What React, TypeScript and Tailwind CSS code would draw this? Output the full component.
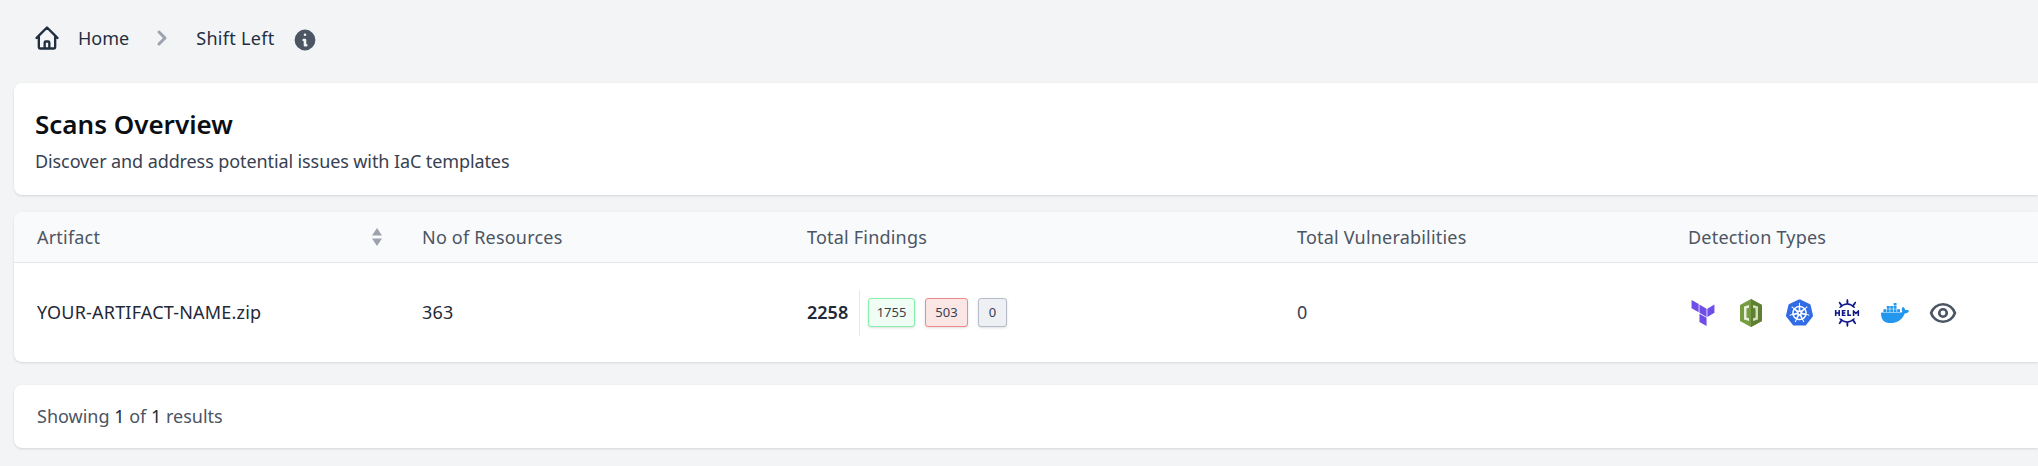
import React from 'react';
import { HiInformationCircle, HiOutlineEye, HiOutlineHome, HiChevronRight } from 'react-icons/hi';
import { SiDocker, SiHelm, SiKubernetes, SiTerraform } from 'react-icons/si';

function CloudFormationIcon() {
  return (
    <svg viewBox="0 0 22 28" className="h-[28px] w-[22px] shrink-0">
      <path d="M11 0 22 6v16l-11 6L0 22V6z" fill="#759c3e" />
      <path d="M11 0 22 6v16l-11 6z" fill="#5f7f33" />
      <path d="M4 7.500l5-1.500v16l-5-1.500z" fill="#e9eedd" />
      <path d="M13 6l5 1.500v13L13 22z" fill="#d3deba" />
      <path d="M6.500 9.500l2.500-.7v10.400l-2.500-.7z" fill="#759c3e" />
      <path d="M13 8.800l2.500.7v9l-2.500.7z" fill="#5f7f33" />
    </svg>
  );
}

function SortArrows() {
  return (
    <svg viewBox="0 0 10 18" className="h-[18px] w-[10px] text-[#9ca3af]" fill="currentColor">
      <path d="M5 0l5 7.500H0z" />
      <path d="M5 18l5-7.500H0z" />
    </svg>
  );
}

function Badge({ value, className }: { value: number; className: string }) {
  return (
    <span className={`flex h-[29px] items-center justify-center rounded-[3px] border text-[13px] text-[#374151] shadow-sm ${className}`}>
      {value}
    </span>
  );
}

function IconSlot({ children }: { children: React.ReactNode }) {
  return <div className="flex w-[24px] justify-center">{children}</div>;
}

const columns = 'grid grid-cols-[385px_385px_490px_391px_1fr]';

export default function App() {
  return (
    <div className="h-[466px] w-full overflow-hidden bg-[#f3f4f6] pl-[14px] font-['Noto_Sans',sans-serif]">
      {/* Breadcrumb */}
      <nav className="flex h-[83px] items-center pb-[7px] pl-[19px] text-[18px] text-[#1f2f3f]">
        <HiOutlineHome className="h-[28px] w-[28px] shrink-0" />
        <span className="ml-[17px]">Home</span>
        <HiChevronRight className="ml-[18px] h-[30px] w-[30px] text-[#9ca3af]" />
        <span className="ml-[19px] tracking-[0.3px]">Shift Left</span>
        <HiInformationCircle className="ml-[17px] mt-[4px] h-[26px] w-[26px] text-[#4b5563]" />
      </nav>

      <div className="flex flex-col gap-[17px]">
        {/* Header card */}
        <section className="rounded-l-lg bg-white pl-[21px] pt-[25px] h-[112px] shadow">
          <h1 className="text-[26px] leading-[32px] font-semibold text-[#0b0f14]">Scans Overview</h1>
          <p className="mt-[9px] text-[18px] leading-[24px] tracking-[-0.1px] text-[#374151]">
            Discover and address potential issues with IaC templates
          </p>
        </section>

        {/* Table */}
        <section className="rounded-l-lg bg-white shadow">
          <div className={`${columns} h-[51px] items-center rounded-tl-lg border-b border-[#e5e7eb] bg-[#f9fafb] pl-[23px] text-[18px] tracking-[0.2px] text-[#4b5563]`}>
            <div className="flex items-center justify-between pr-[40px]">
              <span>Artifact</span>
              <SortArrows />
            </div>
            <span>No of Resources</span>
            <span>Total Findings</span>
            <span>Total Vulnerabilities</span>
            <span>Detection Types</span>
          </div>
          <div className={`${columns} h-[99px] items-center pl-[23px] text-[18px] tracking-[0.2px] text-[#1f2937]`}>
            <span>YOUR-ARTIFACT-NAME.zip</span>
            <span>363</span>
            <div className="flex h-[46px] items-center">
              <span className="w-[52px] text-[18px] font-semibold tracking-normal">2258</span>
              <div className="flex h-full items-center gap-[10px] border-l border-[#e5e7eb] pl-[8px] tracking-normal">
                <Badge value={1755} className="w-[47px] border-[#86efac] bg-[#f0fdf4]" />
                <Badge value={503} className="w-[43px] border-[#f08a8a] bg-[#fbe6e6]" />
                <Badge value={0} className="w-[29px] border-[#b3bcc8] bg-[#eef0f3]" />
              </div>
            </div>
            <span className="text-[#374151]">0</span>
            <div className="flex items-center gap-[24px] pl-[3px]">
              <IconSlot>
                <SiTerraform className="h-[26px] w-[26px] shrink-0 text-[#6f4ee8]" />
              </IconSlot>
              <IconSlot>
                <CloudFormationIcon />
              </IconSlot>
              <IconSlot>
                <SiKubernetes className="h-[27px] w-[27px] shrink-0 text-[#326ce5]" />
              </IconSlot>
              <IconSlot>
                <SiHelm className="h-[28px] w-[28px] shrink-0 text-[#0f1689]" />
              </IconSlot>
              <IconSlot>
                <SiDocker className="h-[28px] w-[28px] shrink-0 text-[#2396ed]" />
              </IconSlot>
              <IconSlot>
                <HiOutlineEye strokeWidth={2.1} className="h-[30px] w-[30px] shrink-0 text-[#4b5563]" />
              </IconSlot>
            </div>
          </div>
        </section>

        {/* Footer */}
        <section className="mt-[6px] flex h-[63px] items-center rounded-l-lg bg-white pl-[23px] text-[18px] text-[#4b5563] shadow">
          <span>
            Showing <span className="text-[#1f2937]">1</span> of <span className="text-[#1f2937]">1</span> results
          </span>
        </section>
      </div>
    </div>
  );
}
